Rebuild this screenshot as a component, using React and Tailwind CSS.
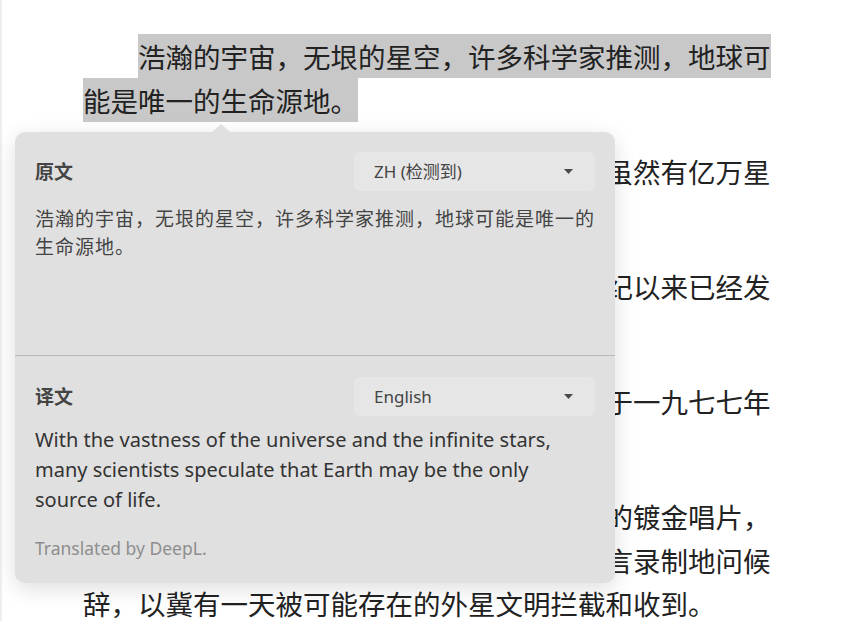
import React from "react";

const CJK = { fontFamily: "'Noto Sans CJK SC', sans-serif" };
const UI = { fontFamily: "'Noto Sans', 'Noto Sans CJK SC', sans-serif" };

function Caret() {
  return (
    <svg width="9" height="5" viewBox="0 0 9 5" className="shrink-0">
      <path d="M0 0 L9 0 L4.5 5 Z" fill="#4a4a4a" />
    </svg>
  );
}

function LangSelect({ label }) {
  return (
    <div className="w-[241px] h-[39px] rounded-md bg-[#e6e6e6] flex items-center justify-between pl-[20px] pr-[22px]">
      <span className="text-[17px] text-[#444]">{label}</span>
      <Caret />
    </div>
  );
}

function Section({ title, lang, children, className }) {
  return (
    <div className={className}>
      <div className="flex items-center justify-between">
        <span className="text-[19px] font-bold text-[#444]" style={CJK}>
          {title}
        </span>
        <LangSelect label={lang} />
      </div>
      {children}
    </div>
  );
}

export default function App() {
  const paras = [
    "太阳系只是银河系中的一员，而银河系虽然有亿万星辰，却尚未发现其他生命的踪迹。",
    "为了寻找地外文明踪迹，人类自二十世纪以来已经发射了多个探测器。",
    "其中著名的旅行者号探测器，分别发射于一九七七年八月和九月。",
    "旅行者号上还携带着一张名为地球之音的镀金唱片，唱片中收录了地球的各种声音和五十五种语言录制地问候辞，以冀有一天被可能存在的外星文明拦截和收到。",
  ];

  return (
    <div className="relative h-[621px] bg-white overflow-hidden shadow-[inset_2px_0_0_#eeeeee]">
      {/* article */}
      <div
        className="pl-[83px] pt-[35px] w-[777px] text-[27.5px] leading-[43.5px] text-[#222]"
        style={CJK}
      >
        <p className="indent-[55px] mb-[28px]">
          <span className="bg-[#c8c8c8] py-[2px]">
            浩瀚的宇宙，无垠的星空，许多科学家推测，地球可能是唯一的生命源地。
          </span>
        </p>
        {paras.map((t, i) => (
          <p key={i} className="indent-[55px] mb-[28px]">
            {t}
          </p>
        ))}
      </div>

      {/* translate popup */}
      <div
        className="absolute left-[15px] top-[132px] w-[600px] h-[451px] rounded-[10px] bg-[#e0e0e0] shadow-[0_6px_22px_rgba(0,0,0,0.13)]"
        style={UI}
      >
        <div className="absolute left-[197px] -top-[8px] w-0 h-0 border-x-[9px] border-x-transparent border-b-[8px] border-b-[#e0e0e0]" />

        <Section title="原文" lang="ZH (检测到)" className="h-[224px] px-[20px] pt-[20px] border-b border-[#b9b9b9]">
          <p className="mt-[13px] text-[19px] leading-[28px] tracking-[1px] text-[#444]" style={CJK}>
            浩瀚的宇宙，无垠的星空，许多科学家推测，地球可能是唯一的生命源地。
          </p>
        </Section>

        <Section title="译文" lang="English" className="px-[20px] pt-[21px]">
          <p className="mt-[9px] text-[20px] leading-[30px] text-[#333]">
            With the vastness of the universe and the infinite stars, many scientists speculate that Earth may be the only source of life.
          </p>
          <p className="mt-[21px] text-[17.5px] leading-[24px] text-[#8e8e8e]">Translated by DeepL.</p>
        </Section>
      </div>
    </div>
  );
}
